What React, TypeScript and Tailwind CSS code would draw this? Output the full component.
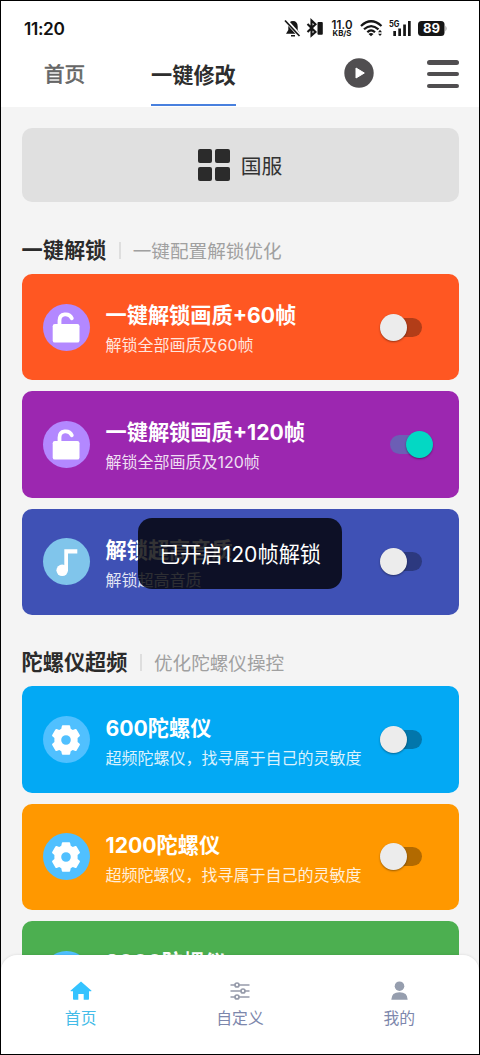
import React from "react";

const SettingsGear = () => (
  <svg viewBox="0 0 30 30" className="size-[30px]" fill="#fff">
    <path
      fillRule="evenodd"
      d="M11.800 .3h6.400q.9 0 1 .9l.5 2.500 2.100 1.200 2.500-.9q.9-.3 1.300.5l3.200 5.400q.4.800-.2 1.300l-2 1.900v3.800l2 1.900q.6.500.2 1.300l-3.200 5.400q-.4.800-1.300.5l-2.500-.9-2.100 1.200-.5 2.500q-.1.900-1 .9h-6.400q-.9 0-1-.9l-.5-2.500-2.100-1.200-2.500.9q-.9.300-1.300-.5l-3.200-5.400q-.4-.8.2-1.300l2-1.900v-3.800l-2-1.900q-.6-.5-.2-1.300l3.200-5.400q.4-.8 1.300-.5l2.500.9 2.100-1.200.5-2.500q.1-.9 1-.9ZM15 10.200a4.800 4.800 0 1 0 0 9.600a4.800 4.800 0 1 0 0-9.600Z"
    />
  </svg>
);

const OpenLock = () => (
  <svg viewBox="0 0 30 34" className="h-[34px] w-[30px]">
    <rect x="1.700" y="14" width="26.800" height="18.600" rx="2.200" fill="#fff" />
    <path d="M8.500 16V10.500C8.500 3.200 18 2.300 20.800 8.300" fill="none" stroke="#fff" strokeWidth="3.800" strokeLinecap="round" />
  </svg>
);

const Note = () => (
  <svg viewBox="0 0 30 30" className="size-[30px]" fill="#fff">
    <path d="M13.300 2.300h13v4.200h-9.300v17.200h-3.700Z" />
    <circle cx="11.200" cy="23.300" r="5.800" />
  </svg>
);

const Toggle = ({ on = false, off }: { on?: boolean; off: string }) =>
  on ? (
    <div className="mr-[26px] flex h-[27px] w-[43px] items-center justify-end">
      <div className="-mr-[24px] h-[19px] w-[40px] shrink-0 rounded-full bg-[#6c5eb5]" />
      <div className="relative size-[27px] shrink-0 rounded-full bg-[#03d8c4] shadow-[0_1px_2px_rgba(0,0,0,0.4)]" />
    </div>
  ) : (
    <div className="mr-[36px] flex h-[27px] w-[43px] items-center">
      <div className="relative size-[27px] shrink-0 rounded-full bg-[#ececec] shadow-[0_1px_2px_rgba(0,0,0,0.4)]" />
      <div className={`-ml-[24.5px] h-[19px] w-[40px] shrink-0 rounded-full ${off}`} />
    </div>
  );

type CardProps = {
  title: string;
  desc: string;
  bg: string;
  disc: string;
  off: string;
  icon: React.ReactNode;
  on?: boolean;
};

const Card = ({ title, desc, bg, disc, off, icon, on }: CardProps) => (
  <div className={`flex h-[106.3px] shrink-0 items-center rounded-[10px] ${bg}`}>
    <div className={`ml-[21px] flex size-[47px] shrink-0 items-center justify-center rounded-full ${disc}`}>{icon}</div>
    <div className="ml-[16px] flex flex-1 flex-col pt-[3px] whitespace-nowrap text-white">
      <div className="h-[30px] text-[21.2px] leading-[30px] font-bold">{title}</div>
      <div className="mt-[3px] h-[24px] text-[16px] leading-[24px] opacity-85">{desc}</div>
    </div>
    <Toggle on={on} off={off} />
  </div>
);

const Heading = ({ title, sub }: { title: string; sub: string }) => (
  <div className="flex h-[30px] items-center whitespace-nowrap">
    <span className="text-[21.2px] leading-[30px] font-bold text-[#2b2b2b]">{title}</span>
    <span className="ml-[13px] h-[17px] w-[1.5px] bg-[#dedede]" />
    <span className="ml-[12px] pt-px text-[18.6px] leading-[30px] text-[#a0a0a0]">{sub}</span>
  </div>
);

const StatusBar = () => (
  <div className="flex h-[54px] items-center justify-between pr-[31px] pl-[23px] text-[#111]">
    <span className="pt-[2px] text-[17.3px] font-semibold tracking-[-0.35px]">11:20</span>
    <svg viewBox="0 0 164 20" className="h-[20px] w-[164px]" fill="#161616">
      <path d="M2 15.800L4.300 12V8.500Q4.500 3 9 3Q13.500 3 13.700 8.500V12L16 15.800Z" />
      <path d="M7 17h4v1.500h-4Z" />
      <path d="M1.500 2L16 18" stroke="#fff" strokeWidth="4" />
      <path d="M1 2.500L15.500 18" stroke="#161616" strokeWidth="1.700" />
      <path d="M23.500 6L31.500 14L27.500 17.500V2.500L31.500 6.200L23.500 14" fill="none" stroke="#161616" strokeWidth="2.100" />
      <rect x="33.500" y="4" width="5.300" height="12.800" rx="1" />
      <text x="47.500" y="10.500" fontSize="11.500" fontWeight="600" textLength="21">11.0</text>
      <text x="48.500" y="18" fontSize="7.500" fontWeight="700" textLength="19" lengthAdjust="spacingAndGlyphs">KB/S</text>
      <g fill="none" stroke="#161616" strokeWidth="2.200">
        <path d="M77 8Q87 -1.500 97.500 8M80 11.300Q87 4.800 94.500 11.300M83.300 14.300Q87 10.500 91 14.300" />
      </g>
      <path d="M84.500 16Q87 13.800 89.500 16L87 18.200Z" />
      <path d="M94 14.200l2-2.400 2 2.400ZM94 15.700h4l-2 2.400Z" />
      <text x="105" y="9" fontSize="8.500" fontWeight="700" textLength="10.500" lengthAdjust="spacingAndGlyphs">5G</text>
      <path d="M109.300 13h2.700v5h-2.700ZM114.300 10.500h2.700v7.500h-2.700ZM119.200 6.500h2.700V18h-2.700ZM124 3h2.700v15H124Z" />
      <rect x="134" y="3" width="26.500" height="15" rx="3.500" />
      <path d="M161.500 7.500q2 3 0 6Z" fill="#888" />
      <text x="139" y="15.300" fontSize="13.300" fontWeight="700" fill="#fff" textLength="17" lengthAdjust="spacingAndGlyphs">89</text>
    </svg>
  </div>
);

export default function App() {
  const navText = "mt-[4.5px] text-[15.8px] leading-[24px]";
  return (
    <div className="relative flex h-[1055px] w-[480px] flex-col overflow-hidden border border-black bg-[#f4f4f4] font-[Inter,'Noto_Sans_CJK_SC',sans-serif]">
      <header className="h-[105.5px] shrink-0 bg-white">
        <StatusBar />
        <div className="flex h-[51.5px] pl-[43px] whitespace-nowrap">
          <div className="w-[107px] pt-[4.5px] text-[20.6px] leading-[30px] text-[#666] [-webkit-text-stroke:0.6px_#666]">首页</div>
          <div className="h-[51px] w-[85px] border-b-2 border-[#4880de] pt-[4.5px] text-[21.2px] leading-[30px] font-bold text-[#2e2e2e]">一键修改</div>
          <svg viewBox="0 0 30 30" className="mt-[3px] ml-[107.5px] size-[30px]">
            <circle cx="15" cy="15" r="14.700" fill="#504e50" />
            <path d="M12 10V20L20.300 15Z" fill="#fff" stroke="#fff" strokeWidth="1" strokeLinejoin="round" />
          </svg>
          <div className="mt-[5px] ml-[53px] flex h-[28px] w-[32px] flex-col justify-between">
            <span className="h-[4.5px] rounded-full bg-[#504e50]" />
            <span className="h-[4.5px] rounded-full bg-[#504e50]" />
            <span className="h-[4.5px] rounded-full bg-[#504e50]" />
          </div>
        </div>
      </header>

      <main className="flex min-h-0 flex-1 flex-col overflow-hidden px-[20.5px] pt-[21.5px]">
        <div className="flex h-[74px] shrink-0 items-center justify-center rounded-[10px] bg-[#e0e0e0]">
          <div className="grid size-[32px] grid-cols-2 gap-[3.5px]">
            <span className="rounded-[2px] bg-[#2b2b2b]" />
            <span className="rounded-[2px] bg-[#2b2b2b]" />
            <span className="rounded-[2px] bg-[#2b2b2b]" />
            <span className="rounded-[2px] bg-[#2b2b2b]" />
          </div>
          <span className="ml-[11px] pt-[4px] text-[20.8px] leading-[30px] text-[#333]">国服</span>
        </div>

        <div className="mt-[33px] shrink-0"><Heading title="一键解锁" sub="一键配置解锁优化" /></div>
        <div className="mt-[9px] flex shrink-0 flex-col gap-[11px]">
          <Card title="一键解锁画质+60帧" desc="解锁全部画质及60帧" bg="bg-[#ff5722]" disc="bg-[#b388ff]" off="bg-[#b23d18]" icon={<OpenLock />} />
          <Card title="一键解锁画质+120帧" desc="解锁全部画质及120帧" bg="bg-[#9c27b0]" disc="bg-[#b388ff]" off="bg-[#6c5eb5]" icon={<OpenLock />} on />
          <Card title="解锁超高音质" desc="解锁超高音质" bg="bg-[#3f51b5]" disc="bg-[#80c5eb]" off="bg-[#2c397f]" icon={<Note />} />
        </div>

        <div className="mt-[32.5px] shrink-0"><Heading title="陀螺仪超频" sub="优化陀螺仪操控" /></div>
        <div className="mt-[9px] flex shrink-0 flex-col gap-[11px]">
          <Card title="600陀螺仪" desc="超频陀螺仪，找寻属于自己的灵敏度" bg="bg-[#03a9f4]" disc="bg-[#50c0ff]" off="bg-[#0276ab]" icon={<SettingsGear />} />
          <Card title="1200陀螺仪" desc="超频陀螺仪，找寻属于自己的灵敏度" bg="bg-[#ff9800]" disc="bg-[#50c0ff]" off="bg-[#b26a00]" icon={<SettingsGear />} />
          <Card title="2000陀螺仪" desc="超频陀螺仪，找寻属于自己的灵敏度" bg="bg-[#4caf50]" disc="bg-[#50c0ff]" off="bg-[#357a38]" icon={<SettingsGear />} />
        </div>
      </main>

      <nav className="relative flex h-[99px] shrink-0 rounded-t-[16px] bg-white shadow-[0_0_3px_rgba(0,0,0,0.12)]">
        <div className="flex flex-1 flex-col items-center pt-[25px] text-[#45bce8]">
          <svg viewBox="0 0 22 22" className="size-[22px]" fill="#34c3ff">
            <path d="M11 1.500 21.300 10.500q.6.700-.2.700H19V19q0 .8-.8.800h-4.500V14H8.300v5.800H3.800Q3 19.800 3 19v-7.800H.9q-.8 0-.2-.700Z" />
          </svg>
          <span className={navText}>首页</span>
        </div>
        <div className="flex flex-1 flex-col items-center pt-[25px] text-[#7d87ac]">
          <svg viewBox="0 0 22 22" className="size-[22px]" fill="#fff" stroke="#969baa" strokeWidth="1.700">
            <path d="M1.500 5h19M1.500 11h19M1.500 17h19" />
            <circle cx="8" cy="5" r="2" /><circle cx="14" cy="11" r="2" /><circle cx="8" cy="17" r="2" />
          </svg>
          <span className={navText}>自定义</span>
        </div>
        <div className="flex flex-1 flex-col items-center pt-[25px] text-[#7d87ac]">
          <svg viewBox="0 0 22 22" className="size-[22px]" fill="#969eae">
            <circle cx="11.500" cy="6.200" r="4.800" />
            <path d="M3.300 19.700Q3.500 12.300 11.500 12.300T19.700 19.700Z" />
          </svg>
          <span className={navText}>我的</span>
        </div>
      </nav>

      <div className="absolute top-[517px] left-[137px] flex h-[71px] w-[204px] items-center justify-center rounded-[14px] bg-[#000002]/80 pt-[3px] text-[21.2px] whitespace-nowrap text-white">
        已开启120帧解锁
      </div>
    </div>
  );
}
